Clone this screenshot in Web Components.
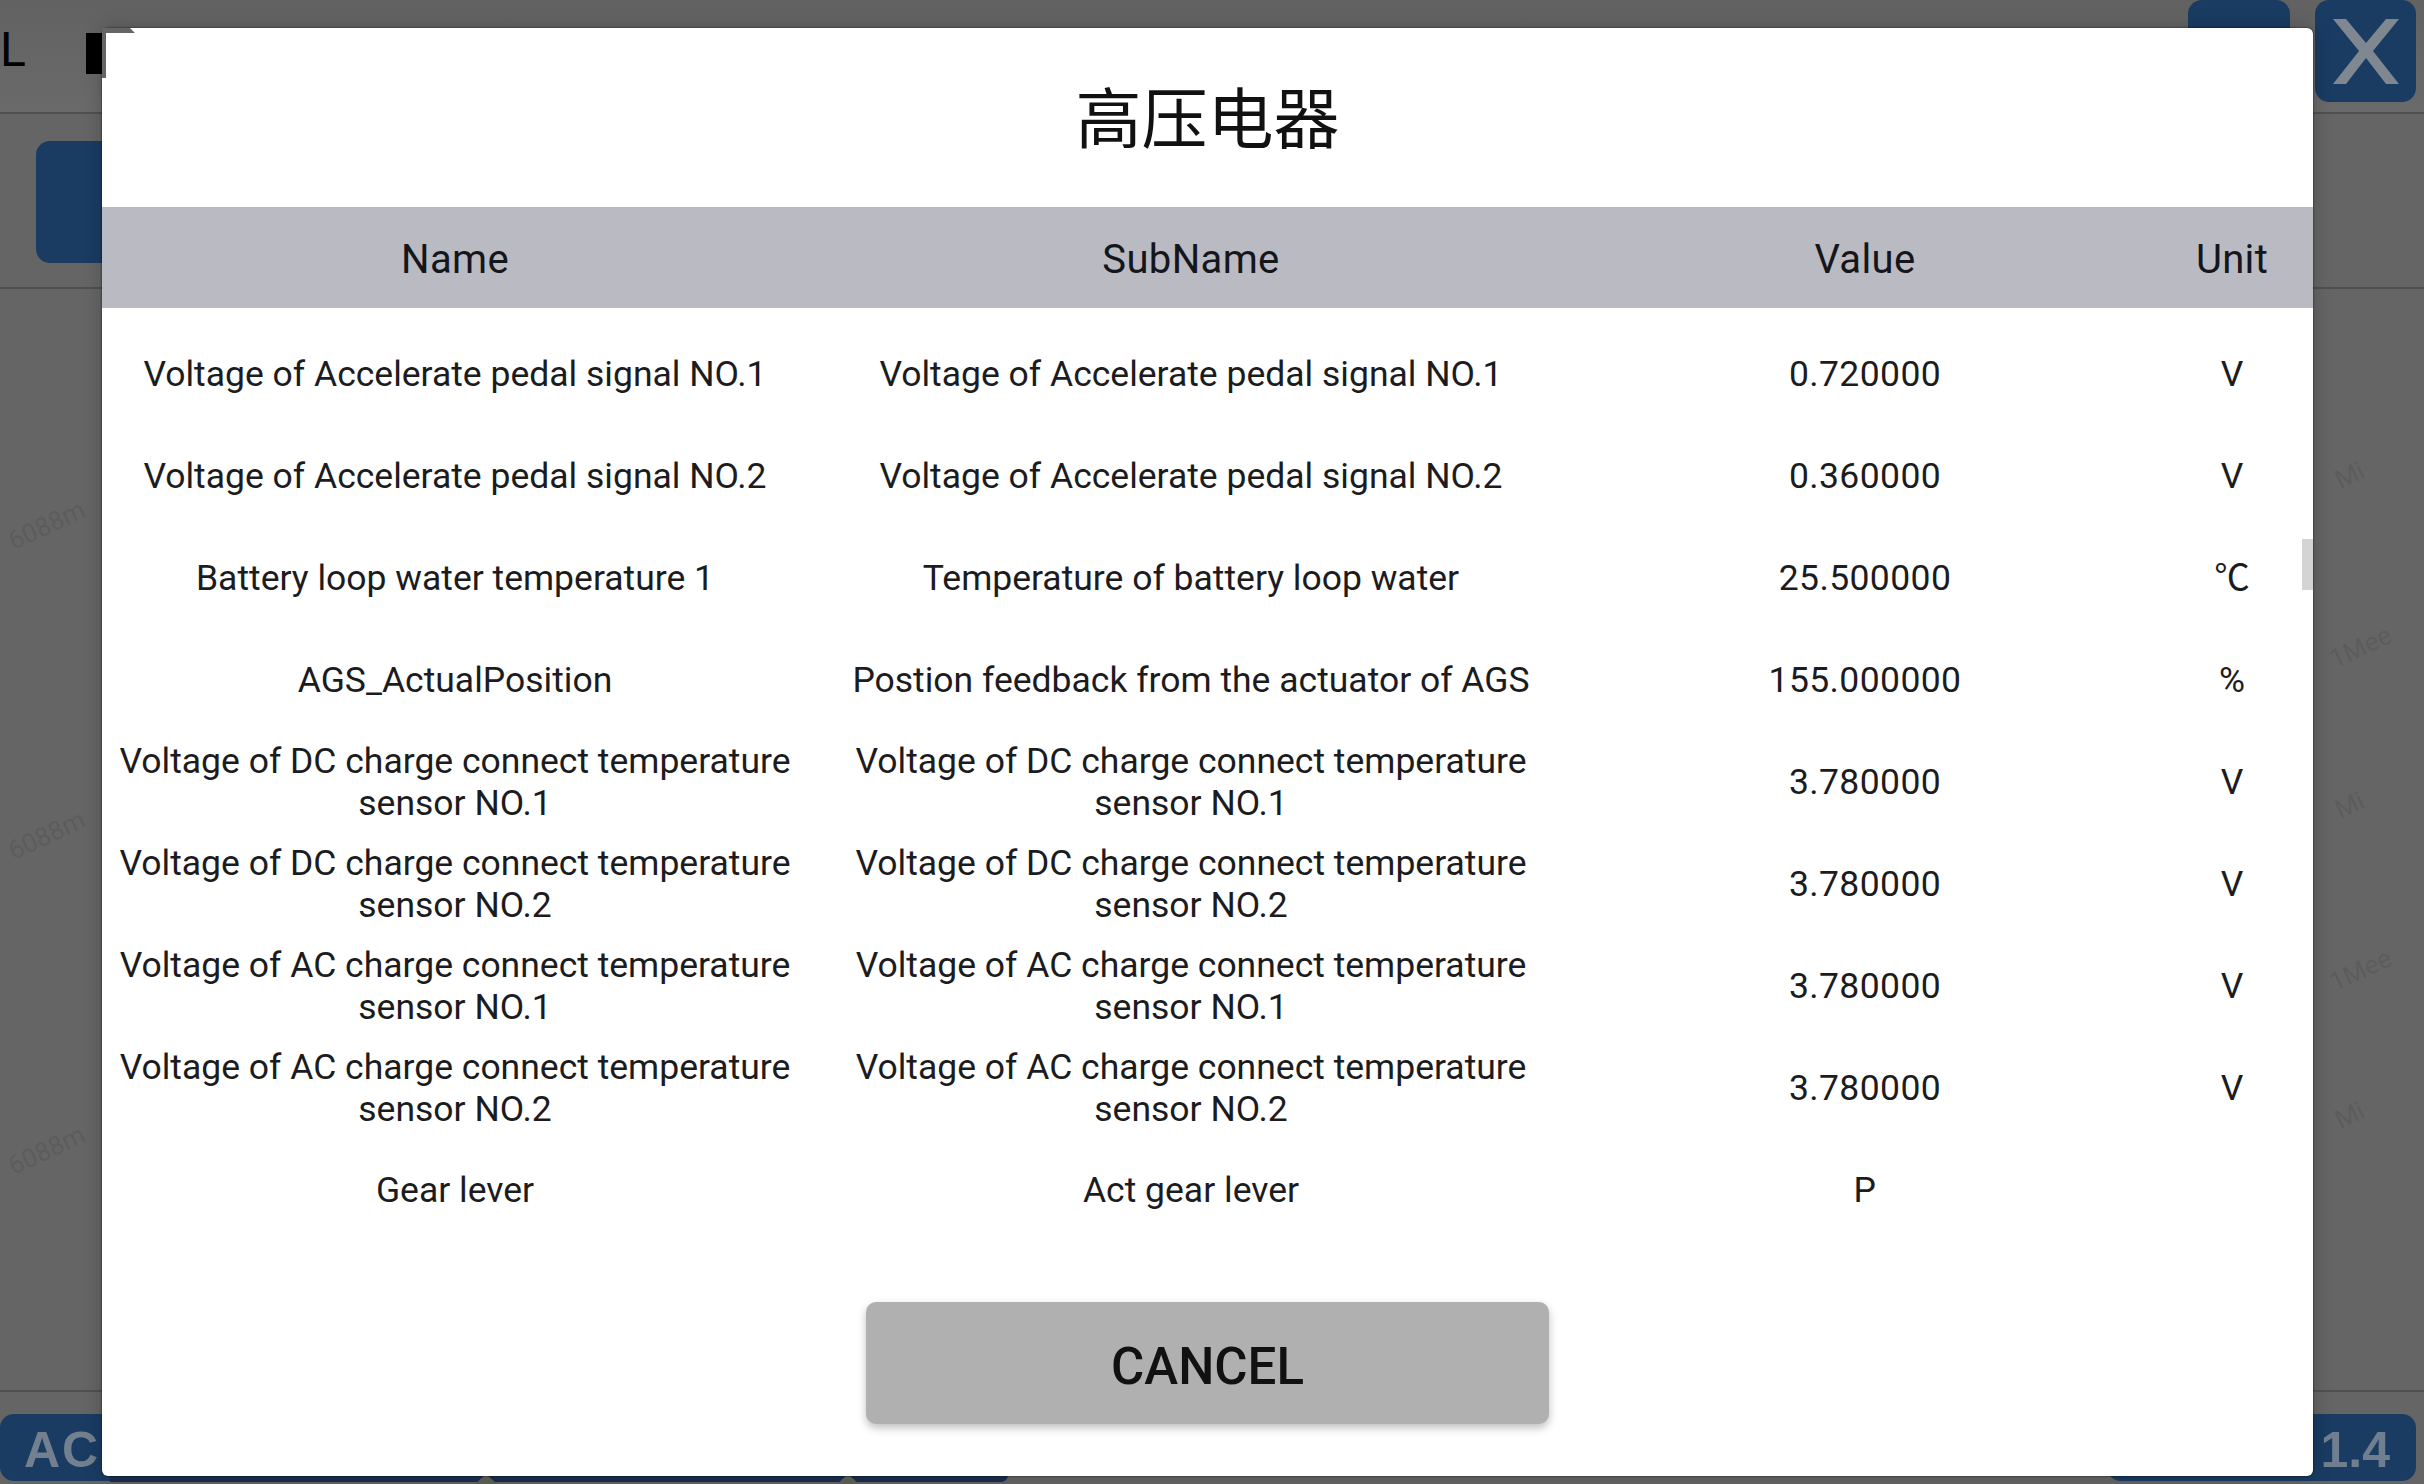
<!DOCTYPE html>
<html><head><meta charset="utf-8"><style>
html,body{margin:0;padding:0;background:#656565;}
body{width:2424px;height:1484px;overflow:hidden;font-family:Roboto,"Noto Sans CJK SC",sans-serif;}
</style></head><body>
<app-backdrop>
<param-dialog title-text="高压电器"></param-dialog>
</app-backdrop>
<script>
const ROWS=[
["Voltage of Accelerate pedal signal NO.1","Voltage of Accelerate pedal signal NO.1","0.720000","V"],
["Voltage of Accelerate pedal signal NO.2","Voltage of Accelerate pedal signal NO.2","0.360000","V"],
["Battery loop water temperature 1","Temperature of battery loop water","25.500000","℃"],
["AGS_ActualPosition","Postion feedback from the actuator of AGS","155.000000","%"],
["Voltage of DC charge connect temperature sensor NO.1","Voltage of DC charge connect temperature sensor NO.1","3.780000","V"],
["Voltage of DC charge connect temperature sensor NO.2","Voltage of DC charge connect temperature sensor NO.2","3.780000","V"],
["Voltage of AC charge connect temperature sensor NO.1","Voltage of AC charge connect temperature sensor NO.1","3.780000","V"],
["Voltage of AC charge connect temperature sensor NO.2","Voltage of AC charge connect temperature sensor NO.2","3.780000","V"],
["Gear lever","Act gear lever","P",""]];
const WM=[[6,510,"6088m"],[6,820,"6088m"],[6,1135,"6088m"],[2335,460,"Mi"],[2328,632,"1Mee"],[2335,790,"Mi"],[2328,955,"1Mee"],[2335,1100,"Mi"]];
class AppBackdrop extends HTMLElement{constructor(){super();this.attachShadow({mode:"open"}).innerHTML=`<style>
:host{display:block;position:relative;width:2424px;height:1484px;overflow:hidden;background:#656565;font-family:Roboto,sans-serif}
.top{height:114px;box-sizing:border-box;border-bottom:2px solid #505050;background:linear-gradient(#626262,#6a6a6a);display:flex;align-items:flex-start}
.l{font:48px/1 Roboto,sans-serif;color:#000;margin:26px 0 0 0;width:86px}
.blk{width:20px;height:41px;background:#000;margin-top:33px;position:relative;z-index:2}
.sp{flex:1}
.bt{background:#1a3c63;border-radius:12px}
.b1{width:102px;height:94px;margin-right:25px;border-radius:14px}
.x{width:101px;height:102px;margin-right:8px;border-radius:14px;display:flex;align-items:center;justify-content:center}
.second{height:175px;box-sizing:border-box;border-bottom:2px solid #505050;padding:27px 0 0 36px}
.b2{width:120px;height:122px;border-radius:14px}
.bottom{position:absolute;left:0;right:0;top:1390px;height:94px;border-top:2px solid #505050;box-sizing:border-box}
.barL{position:absolute;left:0;top:22px;width:110px;height:67px;border-radius:14px 0 0 14px;color:#72808f;font:bold 50px/73px "Liberation Sans",sans-serif;letter-spacing:2px;padding-left:24px;box-sizing:border-box;overflow:hidden;white-space:nowrap}
.barR{position:absolute;left:2107px;top:22px;width:309px;height:67px;border-radius:14px;color:#6f7f8f;font:bold 50px/73px "Liberation Sans",sans-serif;text-align:right;padding-right:26px;box-sizing:border-box}
.strip{position:absolute;left:110px;top:1475px;width:898px;height:7px;background:#1a2f50;border-radius:0 0 10px 0}
.tri{position:absolute;top:1474px;width:0;height:0;border:11px solid transparent;border-top:0;border-bottom:10px solid #5e6258}
.wm{position:absolute;color:rgba(72,72,72,.28);font-size:26px;transform:rotate(-25deg);white-space:nowrap}
.notch{position:absolute;left:102px;top:28px;z-index:2;display:block}
::slotted(*){z-index:1}
</style>
<div class="top"><div class="l">L</div><div class="blk"></div><div class="sp"></div><div class="bt b1"></div><div class="bt x"><svg width="66" height="66" viewBox="0 0 66 66"><path d="M0 1H13L33 25 53 1H66L40 33 66 66H53L33 40 13 66H0L26 33Z" fill="#7f8890"/></svg></div></div>
<div class="second"><div class="bt b2"></div></div>
${WM.map(w=>`<span class="wm" style="left:${w[0]}px;top:${w[1]}px">${w[2]}</span>`).join("")}
<div class="bottom"><div class="bt barL">ACC</div><div class="bt barR">1.4</div></div>
<div class="strip"></div><div class="tri" style="left:475px"></div><div class="tri" style="left:837px"></div>
<slot></slot>
<svg class="notch" width="34" height="52" viewBox="0 0 34 52"><path d="M0 0H28L33 5H4V50H0Z" fill="#656565"/></svg>`}}
class ParamDialog extends HTMLElement{constructor(){super();const rows=ROWS.map(r=>`<param-row a="${r[0]}" b="${r[1]}" c="${r[2]}" d="${r[3]}"></param-row>`).join("");this.attachShadow({mode:"open"}).innerHTML=`<style>
:host{display:flex;flex-direction:column;position:absolute;left:102px;top:28px;width:2211px;height:1448px;background:#fff;border-radius:6px;color:#1c1c1f;font-family:Roboto,"Noto Sans CJK SC",sans-serif;overflow:hidden;box-shadow:0 0 2px rgba(0,0,0,.8),0 0 20px rgba(0,0,0,.22)}
h1{margin:0;height:179px;box-sizing:border-box;padding-bottom:8px;display:flex;align-items:center;justify-content:center;font:400 66px/1 "Noto Sans CJK SC",sans-serif;color:#111}
.list{padding-top:16px;position:relative;flex:1}
.sb{position:absolute;right:0;top:231px;width:11px;height:51px;background:#d4d4d4}
.foot{position:absolute;left:764px;top:1274px;width:683px;height:122px;box-sizing:border-box;padding-top:6px;background:#b0b0b0;border-radius:10px;box-shadow:0 4px 8px rgba(0,0,0,.25);display:flex;align-items:center;justify-content:center;font:500 51px/1 Roboto,sans-serif;color:#111}
</style>
<h1>${this.getAttribute("title-text")||"高压电器"}</h1>
<param-row head a="Name" b="SubName" c="Value" d="Unit"></param-row>
<div class="list">${rows}<div class="sb"></div></div>
<div class="foot">CANCEL</div>`}}
class ParamRow extends HTMLElement{constructor(){super();const g=n=>this.getAttribute(n)||"";this.attachShadow({mode:"open"}).innerHTML=`<style>
:host{display:grid;grid-template-columns:706px 766px 582px 152px;height:102px;align-items:center;text-align:center;font-family:Roboto,"Noto Sans CJK SC",sans-serif;font-size:35.5px;line-height:41.6px}
:host(:not([head])) div:nth-of-type(3){letter-spacing:.4px}
:host([head]){height:101px;background:#b9bac2;font-size:40px;letter-spacing:.35px;color:#15151c}
:host([head]) div{padding-top:5px}
div{padding:0 8px}
</style><div>${g("a")}</div><div>${g("b")}</div><div>${g("c")}</div><div>${g("d")}</div>`}}
customElements.define("param-row",ParamRow);
customElements.define("param-dialog",ParamDialog);
customElements.define("app-backdrop",AppBackdrop);
</script></body></html>
